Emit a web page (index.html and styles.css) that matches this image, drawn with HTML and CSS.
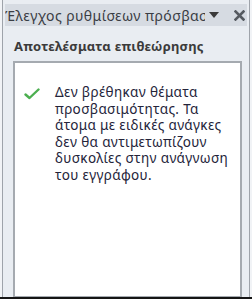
FILE: index.html
```html
<!DOCTYPE html>
<html lang="el">
<head>
<meta charset="utf-8">
<link rel="stylesheet" href="styles.css">
</head>
<body>
<div class="window">
  <div class="pane">
    <div class="titlebar">
      <span class="title">Έλεγχος ρυθμίσεων πρόσβασης</span>
      <svg class="dropdown" width="10" height="6" viewBox="0 0 10 6"><polygon points="0,0 10,0 5,6" fill="#3a3a3a"/></svg>
      <svg class="close" width="11" height="11" viewBox="0 0 11 11"><path d="M1.5 1.5 L9.5 9.5 M9.5 1.5 L1.5 9.5" stroke="#555a60" stroke-width="2.6" stroke-linecap="square"/></svg>
    </div>
    <div class="heading">Αποτελέσματα επιθεώρησης</div>
    <div class="results">
      <div class="result">
        <svg class="check" width="16" height="12" viewBox="0 0 16 12"><path d="M1.5 6.5 L5.5 10 L14.5 1.5" fill="none" stroke="#4caf50" stroke-width="2.4" stroke-linecap="round" stroke-linejoin="round"/></svg>
        <p class="message">Δεν βρέθηκαν θέματα προσβασιμότητας. Τα άτομα με ειδικές ανάγκες δεν θα αντιμετωπίζουν δυσκολίες στην ανάγνωση του εγγράφου.</p>
      </div>
    </div>
  </div>
  <div class="bottom"></div>
</div>
</body>
</html>
```

FILE: styles.css
```css
html, body {
  margin: 0;
  padding: 0;
}
body {
  width: 252px;
  height: 299px;
  background: #f1f3f6;
  font-family: "Noto Sans", "Open Sans", sans-serif;
  overflow: hidden;
}
.window {
  height: 299px;
  display: flex;
  flex-direction: column;
}
.pane {
  flex: 1;
  margin: 0 2px;
  border-left: 1px solid #9ea3aa;
  border-right: 1px solid #9ea3aa;
  background: #e9edf2;
  display: flex;
  flex-direction: column;
  min-height: 0;
}
.bottom {
  height: 2px;
  background: #151515;
}
.titlebar {
  margin: 4px 2px 0 2px;
  height: 22px;
  background: #d6dbe2;
  display: flex;
  align-items: center;
  padding-left: 0;
}
.title {
  width: 200px;
  overflow: hidden;
  white-space: nowrap;
  font-size: 14px;
  letter-spacing: 0.4px;
  color: #3a3d44;
}
.dropdown {
  margin-left: 4px;
}
.close {
  margin-left: 15px;
}
.heading {
  margin: 11px 0 0 11px;
  font-size: 13px;
  letter-spacing: 0.2px;
  font-weight: bold;
  color: #3b3b3b;
  line-height: 18px;
}
.results {
  flex: 1;
  margin: 6px 7px 0 10px;
  background: #ffffff;
  border: 2px solid #a5aab0;
  border-bottom-width: 1px;
}
.result {
  display: flex;
  align-items: flex-start;
  padding: 21px 8px 0 9px;
}
.check {
  flex: none;
  margin-top: 4px;
}
.message {
  margin: 0 0 0 15px;
  font-size: 13.5px;
  letter-spacing: 0.35px;
  line-height: 16.5px;
  color: #24243a;
}
```
